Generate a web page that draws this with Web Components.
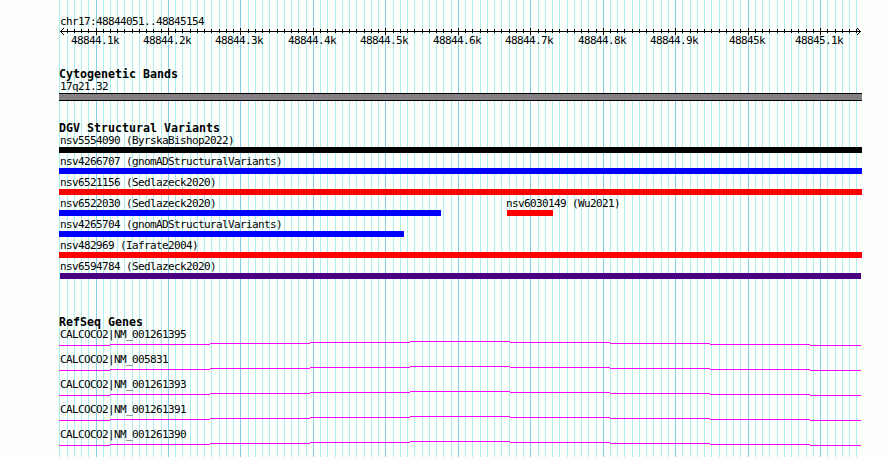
<!DOCTYPE html>
<html lang="en">
<head>
<meta charset="utf-8">
<title>chr17:48844051..48845154</title>
<style>
body{
    margin: 0;
    background: #fdfffc;
    overflow: hidden;
}
</style>
</head>
<body>
<genome-view>
    <scale-ruler data-region="chr17:48844051..48845154"></scale-ruler>
    <genome-track data-name="Cytogenetic Bands" style="height:54px">
        <cyto-band data-label="17q21.32"></cyto-band>
    </genome-track>
    <genome-track data-name="DGV Structural Variants" style="height:194px">
        <variant-row><sv-bar data-label="nsv5554090 (ByrskaBishop2022)" data-width="803" data-color="#000"></sv-bar></variant-row>
        <variant-row><sv-bar data-label="nsv4266707 (gnomADStructuralVariants)" data-width="803" data-color="#00f"></sv-bar></variant-row>
        <variant-row><sv-bar data-label="nsv6521156 (Sedlazeck2020)" data-width="803" data-color="#f00"></sv-bar></variant-row>
        <variant-row>
            <sv-bar data-label="nsv6522030 (Sedlazeck2020)" data-width="382" data-color="#00f"></sv-bar>
            <sv-bar data-label="nsv6030149 (Wu2021)" data-gap="66" data-width="46" data-color="#f00" data-inset="-1"></sv-bar>
        </variant-row>
        <variant-row><sv-bar data-label="nsv4265704 (gnomADStructuralVariants)" data-width="345" data-color="#00f"></sv-bar></variant-row>
        <variant-row><sv-bar data-label="nsv482969 (Iafrate2004)" data-width="803" data-color="#f00"></sv-bar></variant-row>
        <variant-row><sv-bar data-label="nsv6594784 (Sedlazeck2020)" data-gap="1" data-width="801" data-color="#4b0082" data-inset="0"></sv-bar></variant-row>
    </genome-track>
    <genome-track data-name="RefSeq Genes">
        <gene-line data-label="CALCOCO2|NM_001261395"></gene-line>
        <gene-line data-label="CALCOCO2|NM_005831"></gene-line>
        <gene-line data-label="CALCOCO2|NM_001261393"></gene-line>
        <gene-line data-label="CALCOCO2|NM_001261391"></gene-line>
        <gene-line data-label="CALCOCO2|NM_001261390"></gene-line>
    </genome-track>
</genome-view>

<script>
// one tick every 10bp, the region is 1104bp drawn over 800px
const START = 48844051;
const ticks = [];
for(let bp = 48844050; bp <= 48845150; bp += 10){
    ticks.push({x: Math.floor(1.5 + (bp - START) * 800 / 1104), major: bp % 100 == 0});
}

class GenomeView extends HTMLElement{
    constructor(){
        super();
        this.attachShadow({mode:"open"});
        let lines = "";
        for(let t of ticks){
            lines += `<rect x="${t.x}" width="1" height="457" fill="${t.major ? "#87ceeb" : "#afeeee"}"/>`;
        }
        this.shadowRoot.innerHTML = `
<style>
:host{
    display: block;
    position: relative;
    box-sizing: border-box;
    width: 890px;
    height: 457px;
    padding: 15px 0 0 59px;
    overflow: hidden;
    color: #000;
    font: 11px/12px "DejaVu Sans Mono", monospace;
    letter-spacing: -0.622px;
}
svg{
    position: absolute;
    left: 59px;
    top: 0;
}
main{
    display: flex;
    flex-direction: column;
    position: relative;
}
</style>
<svg width="803" height="457" shape-rendering="crispEdges">${lines}</svg>
<main><slot></slot></main>`;
    }
}

class ScaleRuler extends HTMLElement{
    constructor(){
        super();
        this.attachShadow({mode:"open"});
        const names = ["48844.1k","48844.2k","48844.3k","48844.4k","48844.5k","48844.6k","48844.7k","48844.8k","48844.9k","48845k","48845.1k"];
        let marks = "";
        for(let t of ticks){
            if(t.x == 0) continue;
            marks += t.major ? `<rect x="${t.x}" y="0" width="1" height="7"/>` : `<rect x="${t.x}" y="1" width="1" height="4"/>`;
        }
        // each cell starts at one major tick and ends at the next, the text is centred on its left edge
        const majors = ticks.filter(t => t.major);
        let labels = majors.map((t, i) => {
            const w = i < 10 ? majors[i + 1].x - t.x : 0;
            return `<span style="width:${w}px"><b>${names[i]}</b></span>`;
        }).join("");
        this.shadowRoot.innerHTML = `
<style>
:host{
    display: block;
    height: 53px;
}
p{
    margin: 0 0 0 1px;
    height: 13px;
    line-height: 14px;
}
svg{
    display: block;
}
div{
    display: flex;
    padding-left: 36px;
}
span{
    display: flex;
    flex: none;
}
b{
    flex: none;
    width: 50px;
    margin-left: -25px;
    text-align: center;
    font-weight: normal;
}
</style>
<p>${this.dataset.region}</p>
<svg width="804" height="7" shape-rendering="crispEdges">
<rect x="1" y="3" width="801" height="1"/>${marks}
<path d="M1 3h1v1h-1zM2 2h1v3h-1zM3 1h1v1h-1zM3 5h1v1h-1zM4 0h1v1h-1zM4 6h1v1h-1z"/>
<path d="M801 3h1v1h-1zM800 2h1v3h-1zM799 1h1v1h-1zM799 5h1v1h-1zM798 0h1v1h-1zM798 6h1v1h-1z"/>
</svg>
<div>${labels}</div>`;
    }
}

class GenomeTrack extends HTMLElement{
    constructor(){
        super();
        this.attachShadow({mode:"open"});
        this.shadowRoot.innerHTML = `
<style>
:host{
    display: block;
}
h2{
    margin: 0;
    height: 12px;
    font-size: 11.63px;
    line-height: 12px;
    font-weight: bold;
    letter-spacing: 0;
}
</style>
<h2>${this.dataset.name}</h2>
<slot></slot>`;
    }
}

class CytoBand extends HTMLElement{
    constructor(){
        super();
        this.attachShadow({mode:"open"});
        this.shadowRoot.innerHTML = `
<style>
:host{
    display: block;
}
p{
    margin: 0 0 1px 1px;
    height: 12px;
    line-height: 14px;
}
div{
    width: 803px;
    height: 6px;
    border: solid #000;
    border-width: 1px 0;
    background: #848084;
}
</style>
<p>${this.dataset.label}</p>
<div></div>`;
    }
}

class VariantRow extends HTMLElement{
    constructor(){
        super();
        this.attachShadow({mode:"open"});
        this.shadowRoot.innerHTML = `
<style>
:host{
    display: flex;
    height: 21px;
}
</style>
<slot></slot>`;
    }
}

class SvBar extends HTMLElement{
    constructor(){
        super();
        this.attachShadow({mode:"open"});
        const d = this.dataset;
        this.shadowRoot.innerHTML = `
<style>
:host{
    display: block;
    flex: none;
    width: ${d.width}px;
    margin-left: ${d.gap || 0}px;
}
p{
    margin: 0 0 1px ${d.inset || 1}px;
    height: 12px;
    line-height: 14px;
    white-space: nowrap;
}
div{
    height: 6px;
    background: ${d.color};
}
</style>
<p>${d.label}</p>
<div></div>`;
    }
}

class GeneLine extends HTMLElement{
    constructor(){
        super();
        this.attachShadow({mode:"open"});
        this.shadowRoot.innerHTML = `
<style>
:host{
    display: block;
    height: 25px;
}
p{
    margin: 0 0 0 1px;
    height: 11px;
    line-height: 14px;
}
svg{
    display: block;
}
</style>
<p>${this.dataset.label}</p>
<svg width="803" height="7" shape-rendering="crispEdges">
<path fill="none" stroke="#f0f" d="M0 6.5H51M51 5.5H151M151 4.5H251M251 3.5H351M351 2.5H451M451 3.5H551M551 4.5H651M651 5.5H751M751 6.5H802"/>
</svg>`;
    }
}

customElements.define("genome-view", GenomeView);
customElements.define("scale-ruler", ScaleRuler);
customElements.define("genome-track", GenomeTrack);
customElements.define("cyto-band", CytoBand);
customElements.define("variant-row", VariantRow);
customElements.define("sv-bar", SvBar);
customElements.define("gene-line", GeneLine);
</script>
</body>
</html>
